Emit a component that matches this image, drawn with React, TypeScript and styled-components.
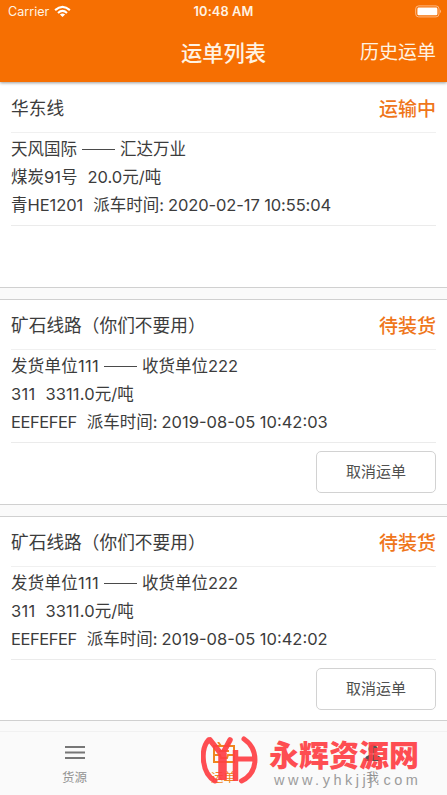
import React from 'react';
import styled, { createGlobalStyle } from 'styled-components';

const ORANGE = '#f66f02';
const RED = '#ff3f44';

const GlobalStyle = createGlobalStyle`
  *, *::before, *::after { box-sizing: border-box; }
  body {
    margin: 0;
    background: #fafafa;
    font-family: Inter, "Noto Sans CJK SC", sans-serif;
    color: #3c3c3c;
    overflow: hidden;
  }
`;

const Screen = styled.div`
  display: flex;
  flex-direction: column;
  height: 795px;
  width: 447px;
  position: relative;
  overflow: hidden;
`;

const Header = styled.header`
  flex: none;
  height: 82px;
  background: ${ORANGE};
  color: #fff3e2;
  box-shadow: 0 1px 3px rgba(0, 0, 0, 0.4);
  position: relative;
  z-index: 1;
`;

const StatusBar = styled.div`
  display: grid;
  grid-template-columns: 1fr auto 1fr;
  align-items: center;
  height: 23px;
  padding: 0 5px 0 8px;
  font-size: 12.6px;
  line-height: 23px;
`;

const Carrier = styled.div`
  display: flex;
  align-items: center;
  gap: 5px;
`;

const Clock = styled.div`
  margin-right: 3px;
  font-size: 12.8px;
  font-weight: 600;
  letter-spacing: 0.1px;
`;

const BatterySlot = styled.div`
  display: flex;
  justify-content: flex-end;
`;

const TitleBar = styled.div`
  display: grid;
  grid-template-columns: 1fr auto 1fr;
  align-items: center;
  height: 59px;
  padding: 0 11px;
`;

const Title = styled.h1`
  grid-column: 2;
  margin: 0;
  font-size: 21.3px;
  font-weight: 500;
  line-height: 30px;
`;

const HeaderLink = styled.a`
  justify-self: end;
  font-size: 19px;
  line-height: 30px;
`;

const List = styled.main`
  flex: 1;
  min-height: 0;
  overflow: hidden;
  display: flex;
  flex-direction: column;
  gap: 11px;
`;

const Card = styled.section<{ $first?: boolean }>`
  flex: none;
  height: 206px;
  padding: 0 11px;
  background: #fff;
  border-top: 1px solid ${p => (p.$first ? '#fff' : '#d0d0d0')};
  border-bottom: 1px solid #d0d0d0;

  &:last-child { height: 205px; }
`;

const CardHead = styled.div`
  display: flex;
  justify-content: space-between;
  align-items: center;
  height: 50px;
  padding-bottom: 1px;
  border-bottom: 1px solid #f0f0f0;
  font-size: 17.7px;
`;

const Status = styled.span`
  color: #ef761b;
  font-size: 19px;
  font-weight: 500;
`;

const Details = styled.div`
  height: 93px;
  padding-top: 2px;
  border-bottom: 1px solid #ebebeb;
`;

const Line = styled.div<{ $gap: number }>`
  display: flex;
  align-items: center;
  gap: ${p => p.$gap}px;
  height: 28px;
  font-size: 16.5px;
  line-height: 28px;
  white-space: nowrap;
`;

const Tracked = styled.span<{ $track: number }>`
  letter-spacing: ${p => p.$track}px;
`;

const Dash = styled.span`
  width: 33px;
  height: 1px;
  background: #4a4a4a;
`;

const Stamp = styled.span`
  display: flex;
  gap: 4px;
`;

const Actions = styled.div`
  display: flex;
  justify-content: flex-end;
  padding-top: 8px;
`;

const CancelButton = styled.button`
  width: 120px;
  height: 42px;
  padding: 0;
  border: 1px solid #d2d2d2;
  border-radius: 5px;
  background: #fff;
  color: #505050;
  font: 400 15px/40px Inter, "Noto Sans CJK SC", sans-serif;
`;

const TabBar = styled.nav`
  flex: none;
  height: 64px;
  display: grid;
  grid-template-columns: repeat(3, 1fr);
  border-top: 1px solid #f1f1f1;
  background: #fafafa;
`;

const Tab = styled.div<{ $active?: boolean }>`
  display: flex;
  flex-direction: column;
  align-items: center;
  padding-top: 10px;
  gap: 4px;
  color: ${p => (p.$active ? '#ef8520' : '#929292')};
  font-size: 12.5px;
  line-height: 19px;
`;

const Watermark = styled.div`
  position: absolute;
  left: 201px;
  top: 735px;
  display: flex;
  gap: 11px;
  opacity: 0.92;
`;

const Brand = styled.div`
  padding-top: 4px;
`;

const BrandName = styled.div`
  color: ${RED};
  font-size: 30px;
  font-weight: 900;
  line-height: 33px;
  white-space: nowrap;
`;

const BrandUrl = styled.div`
  padding-left: 5px;
  color: #959595;
  font: 400 14.5px/16px "Liberation Sans", sans-serif;
  letter-spacing: 3.5px;
  white-space: nowrap;
`;

const WifiIcon = () => (
  <svg width="17" height="13" viewBox="0 0 17 13" fill="none" stroke="#fff" strokeWidth="2.1">
    <path d="M1.1 5.1Q8.5-1.5 15.9 5.1" />
    <path d="M4 8Q8.5 3.8 13 8" />
    <path d="M8.5 12.1 5.9 9.6Q8.5 7.5 11.1 9.6Z" fill="#fff" stroke="none" />
  </svg>
);

const BatteryIcon = () => (
  <svg width="27" height="13" viewBox="0 0 27 13">
    <rect x=".7" y=".9" width="23.3" height="11" rx="3" fill="none" stroke="#ffb983" />
    <rect x="2.4" y="2.5" width="20" height="7.8" rx="1.4" fill="#fff" />
    <path d="M25 4.6q2 1.8 0 3.6z" fill="#ffb983" />
  </svg>
);

const MenuIcon = () => (
  <svg width="22" height="22" viewBox="0 0 22 22" fill="#777">
    <rect x="1" y="4" width="20" height="2" />
    <rect x="1" y="9.5" width="20" height="2" />
    <rect x="1" y="15" width="20" height="2" />
  </svg>
);

const OrderIcon = () => (
  <svg width="24" height="22" viewBox="0 0 24 22" fill="none" stroke="#ef8520" strokeWidth="2">
    <path d="M6 0l3 4M18 0l-3 4M2 4h20v16H2zM2 13h6l1 3h6l1-3h6M7 9h10" />
  </svg>
);

const PersonIcon = () => (
  <svg width="22" height="22" viewBox="0 0 22 22" fill="#555">
    <circle cx="11" cy="7" r="4.5" />
    <path d="M3 19v-2c0-3 4-4.5 8-4.5s8 1.5 8 4.5v2z" />
  </svg>
);

const BrandLogo = () => (
  <svg width="57" height="50" viewBox="0 0 57 50" fill="none" stroke={RED} strokeWidth="5" strokeLinecap="round">
    <path d="M7.5 5C-.5 14 0 38 14 46" />
    <path d="M9 5L21 20 29 5" strokeWidth="5.5" />
    <path d="M21.5 18v27" strokeWidth="8.5" strokeLinecap="butt" />
    <path d="M34.5 15v31" strokeWidth="5.5" strokeLinecap="butt" />
    <path d="M35 24h18M43 4C57.5 14 58.5 37 40.5 46" />
  </svg>
);

interface Order {
  route: string;
  status: string;
  from: string;
  to: string;
  goods: string;
  price: string;
  plate: string;
  time: string;
  cancellable: boolean;
  track: { route: number; plate: number; time: number };
}

const transit = { route: 0, plate: -0.05, time: -0.1 };
const waiting = { route: 0.25, plate: -0.45, time: 0 };

const orders: Order[] = [
  { route: '华东线', status: '运输中', from: '天风国际', to: '汇达万业', goods: '煤炭91号', price: '20.0元/吨', plate: '青HE1201', time: '2020-02-17 10:55:04', cancellable: false, track: transit },
  { route: '矿石线路（你们不要用）', status: '待装货', from: '发货单位111', to: '收货单位222', goods: '311', price: '3311.0元/吨', plate: 'EEFEFEF', time: '2019-08-05 10:42:03', cancellable: true, track: waiting },
  { route: '矿石线路（你们不要用）', status: '待装货', from: '发货单位111', to: '收货单位222', goods: '311', price: '3311.0元/吨', plate: 'EEFEFEF', time: '2019-08-05 10:42:02', cancellable: true, track: waiting },
];

export default function App() {
  return (
    <>
      <GlobalStyle />
      <Screen>
        <Header>
          <StatusBar>
            <Carrier>Carrier <WifiIcon /></Carrier>
            <Clock>10:48 AM</Clock>
            <BatterySlot><BatteryIcon /></BatterySlot>
          </StatusBar>
          <TitleBar>
            <Title>运单列表</Title>
            <HeaderLink>历史运单</HeaderLink>
          </TitleBar>
        </Header>
        <List>
          {orders.map((o, i) => (
            <Card key={i} $first={i === 0}>
              <CardHead>
                <span>{o.route}</span>
                <Status>{o.status}</Status>
              </CardHead>
              <Details>
                <Line $gap={5}>
                  <Tracked $track={o.track.route}>{o.from}</Tracked>
                  <Dash />
                  <span>{o.to}</span>
                </Line>
                <Line $gap={10}>
                  <Tracked $track={o.track.route}>{o.goods}</Tracked>
                  <Tracked $track={o.track.route / 2}>{o.price}</Tracked>
                </Line>
                <Line $gap={10}>
                  <Tracked $track={o.track.plate}>{o.plate}</Tracked>
                  <Stamp>
                    <span>派车时间:</span>
                    <Tracked $track={o.track.time}>{o.time}</Tracked>
                  </Stamp>
                </Line>
              </Details>
              {o.cancellable && <Actions><CancelButton>取消运单</CancelButton></Actions>}
            </Card>
          ))}
        </List>
        <TabBar>
          <Tab><MenuIcon />货源</Tab>
          <Tab $active><OrderIcon />运单</Tab>
          <Tab><PersonIcon />我</Tab>
        </TabBar>
        <Watermark>
          <BrandLogo />
          <Brand>
            <BrandName>永辉资源网</BrandName>
            <BrandUrl>www.yhkjjj.com</BrandUrl>
          </Brand>
        </Watermark>
      </Screen>
    </>
  );
}
